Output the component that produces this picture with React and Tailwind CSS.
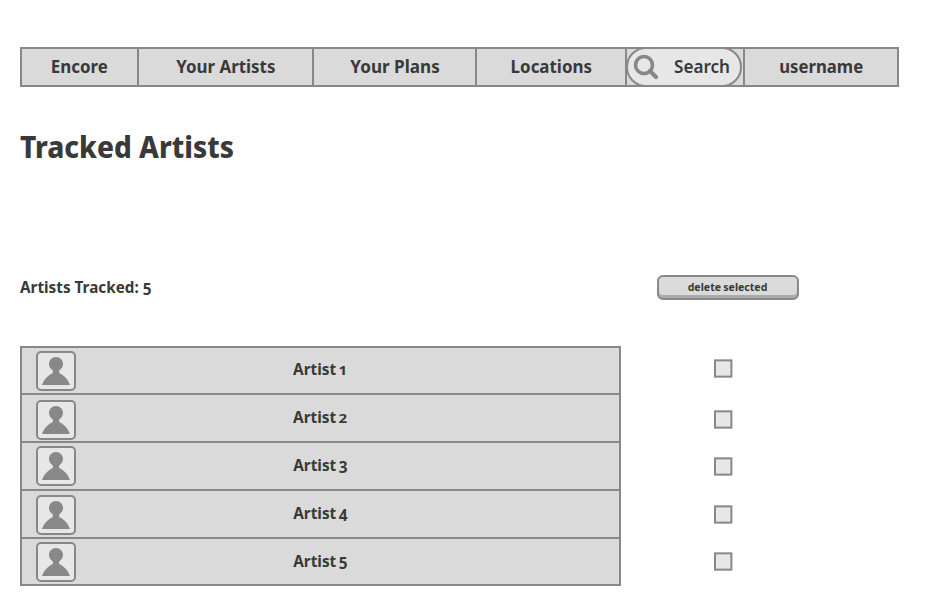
import React from "react";

const FONT = "font-['Noto_Sans','Open_Sans',sans-serif]";

function Label({ className = "", children }) {
  return <span className={`inline-block whitespace-nowrap ${className}`}>{children}</span>;
}

// Text figures: 1 and 2 sit at x-height, 3 to 5 hang below the baseline.
function Figure({ n }) {
  const shape = n > 2 ? "text-[16px] translate-y-[2px]" : "text-[13px] scale-x-[1.2]";
  return <span className={`inline-block leading-none ${shape}`}>{n}</span>;
}

function Avatar({ className }) {
  return (
    <div className={`h-10 w-10 shrink-0 rounded-[5px] border-2 border-[#888] bg-[#e7e7e7] ${className}`}>
      <svg viewBox="2 2 36 36" className="block h-9 w-9" fill="#888">
        <path d="M20 6c4 0 7 3 7 7 0 2.500-1.500 4.700-3.200 6-1.200 1-1 2.800.2 3.600C28.500 24.500 32 29 34 34H6c2-5 5.500-9.500 10-11.400 1.200-.8 1.400-2.600.2-3.600C14.500 17.700 13 15.500 13 13c0-4 3-7 7-7z" />
      </svg>
    </div>
  );
}

function Checkbox() {
  return (
    <svg role="checkbox" aria-checked="false" viewBox="0 0 19 19" className="block h-[19px] w-[19px]">
      <rect x="1" y="1.350" width="16.400" height="16.300" fill="#e7e7e7" stroke="#888" strokeWidth="2" />
    </svg>
  );
}

const NAV = [
  { label: "Encore", width: "w-[115px]", text: "scale-x-[0.94]" },
  { label: "Your Artists", width: "w-[175px] border-l-2", text: "scale-x-[0.94]" },
  { label: "Your Plans", width: "w-[163px] border-l-2 pl-px", text: "scale-x-[0.95]" },
  { label: "Locations", width: "w-[150px] border-l-2", text: "scale-x-[0.94]" },
];

const ROWS = [
  { n: 1, height: "h-[45px]", avatar: "mt-[3px]", leading: "leading-[42px]" },
  { n: 2, height: "h-12 border-t-2", avatar: "mt-[5px]", leading: "leading-[44px]" },
  { n: 3, height: "h-12 border-t-2", avatar: "mt-[3px]", leading: "leading-[44px]" },
  { n: 4, height: "h-12 border-t-2", avatar: "mt-1", leading: "leading-[44px]" },
  { n: 5, height: "h-[47px] border-t-2", avatar: "mt-[3px]", leading: "leading-[44px]" },
];

const CHECKS = ["mt-[13px]", "mt-8", "mt-7", "mt-[29px]", "mt-7"];

export default function App() {
  return (
    <div className={`h-[606px] w-[940px] overflow-hidden bg-white pl-5 pt-[47px] font-bold text-[#393939] ${FONT}`}>
      <nav className="flex h-10 w-[879px] border-2 border-[#888] bg-[#dadada] text-[18px] leading-[34px]">
        {NAV.map((item) => (
          <div key={item.label} className={`flex shrink-0 justify-center border-[#888] ${item.width}`}>
            <Label className={item.text}>{item.label}</Label>
          </div>
        ))}
        <div className="flex w-[118px] shrink-0 border-l-2 border-[#888]">
          <div className="-my-0.5 -ml-px flex h-10 w-[116px] shrink-0 items-center rounded-[20px] border-2 border-[#888] bg-[#e7e7e7]">
            <svg viewBox="0 0 26 26" className="ml-[5px] h-[26px] w-[26px] shrink-0" fill="none" stroke="#888" strokeWidth="3.600">
              <circle cx="11" cy="11" r="8.500" />
              <path d="M17 17l6 6" strokeWidth="4.200" strokeLinecap="round" />
            </svg>
            <Label className="-mt-0.5 ml-[15px] origin-left scale-x-[0.95] font-semibold">Search</Label>
          </div>
        </div>
        <div className="flex grow justify-center border-l-2 border-[#888]">
          <Label className="scale-x-[0.93]">username</Label>
        </div>
      </nav>

      <h1 className="mt-[40px] h-10 text-[30px] leading-10">
        <Label className="origin-left scale-x-[0.934] font-extrabold">Tracked Artists</Label>
      </h1>

      <div className="mt-[108px] flex h-[25px] items-start">
        <p className="w-[637px] text-[16px] leading-[25px]">
          <Label className="origin-left scale-x-[0.955]">
            Artists Tracked: <Figure n={5} />
          </Label>
        </p>
        <button className="flex h-[25px] w-[142px] justify-center rounded-[6px] border-2 border-[#888] bg-[#dadada] text-[11px] leading-[19px] shadow-[inset_0_-3px_0_#aaa]">
          <Label className="scale-x-[0.96] pr-0.5 [word-spacing:-0.5px]">delete selected</Label>
        </button>
      </div>

      <div className="mt-[46px] flex">
        <div className="w-[601px] border-2 border-[#888] bg-[#dadada]">
          {ROWS.map((row) => (
            <div key={row.n} className={`flex border-[#888] pl-[14px] ${row.height}`}>
              <Avatar className={row.avatar} />
              <div className={`flex grow justify-center pr-[55px] text-[16px] ${row.leading}`}>
                <Label className="scale-x-[0.96] [word-spacing:-1.5px]">
                  Artist <Figure n={row.n} />
                </Label>
              </div>
            </div>
          ))}
        </div>
        <div className="ml-[93px] flex flex-col">
          {CHECKS.map((gap, i) => (
            <div key={i} className={gap}>
              <Checkbox />
            </div>
          ))}
        </div>
      </div>
    </div>
  );
}
